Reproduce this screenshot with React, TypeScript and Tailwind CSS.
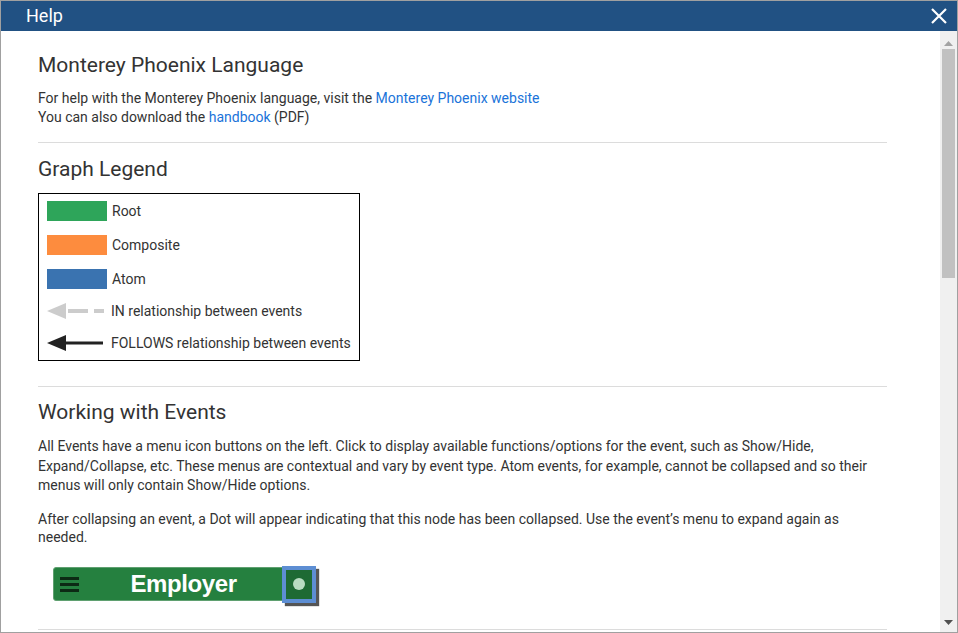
import React from 'react';

const legendSwatches = [
  { label: 'Root', color: 'bg-[#2ea55a]' },
  { label: 'Composite', color: 'bg-[#fd8c3e]' },
  { label: 'Atom', color: 'bg-[#3a73b0]' },
];

const App: React.FC = () => {
  return (
    <div className="w-[958px] h-[633px] border border-[#a0a0a0] flex flex-col overflow-hidden bg-white font-['Roboto',sans-serif]">
      {/* title bar */}
      <div className="h-[30px] shrink-0 bg-[#215183] flex items-center justify-between pl-[25px] pr-[9px]">
        <span className="text-white text-[18px] leading-none">Help</span>
        <svg width="18" height="18" viewBox="0 0 18 18" className="text-white">
          <path d="M2 2 L16 16 M16 2 L2 16" stroke="currentColor" strokeWidth="2.2" />
        </svg>
      </div>

      <div className="flex flex-1 min-h-0">
        {/* body */}
        <div className="flex-1 overflow-hidden pl-[37px] pr-[53px] text-[#333] text-[14px]">
          <h2 className="mt-[22px] text-[21px] leading-[24px] text-[#333]">Monterey Phoenix Language</h2>
          <p className="mt-[12px] leading-[19px]">
            For help with the Monterey Phoenix language, visit the{' '}
            <a className="text-[#1a73d9]">Monterey Phoenix website</a>
            <br />
            You can also download the <a className="text-[#1a73d9]">handbook</a> (PDF)
          </p>
          <hr className="mt-[15px] border-t border-[#dcdcdc]" />

          <h2 className="mt-[14px] text-[21px] leading-[24px]">Graph Legend</h2>
          <div className="mt-[12px] w-[322px] h-[168px] border border-black pl-[8px] pt-[7px]">
            {legendSwatches.map((s) => (
              <div key={s.label} className="flex items-center h-[20px] mb-[14px]">
                <div className={`w-[60px] h-[20px] ${s.color}`} />
                <span className="ml-[5px] leading-none -mt-[1px]">{s.label}</span>
              </div>
            ))}
            <div className="flex items-center h-[20px] -mt-[2px]">
              <svg width="60" height="20" viewBox="0 0 60 20">
                <polygon points="0,10 19,2 19,18" fill="#cccccc" />
                <rect x="21" y="8" width="20" height="4" fill="#cccccc" />
                <rect x="47" y="8" width="10" height="4" fill="#cccccc" />
              </svg>
              <span className="ml-[4px] leading-none">IN relationship between events</span>
            </div>
            <div className="flex items-center h-[20px] mt-[12px]">
              <svg width="60" height="20" viewBox="0 0 60 20">
                <polygon points="0,10 19,2 19,18" fill="#222" />
                <rect x="17" y="8.5" width="39" height="3" fill="#222" />
              </svg>
              <span className="ml-[4px] leading-none">FOLLOWS relationship between events</span>
            </div>
          </div>
          <hr className="mt-[25px] border-t border-[#dcdcdc]" />

          <h2 className="mt-[13px] text-[21px] leading-[24px]">Working with Events</h2>
          <p className="mt-[13px] leading-[19.5px]">
            All Events have a menu icon buttons on the left. Click to display available functions/options for the event, such as Show/Hide, Expand/Collapse, etc. These menus are contextual and vary by event type. Atom events, for example, cannot be collapsed and so their menus will only contain Show/Hide options.
          </p>
          <p className="mt-[14px] leading-[18.5px]">
            After collapsing an event, a Dot will appear indicating that this node has been collapsed. Use the event’s menu to expand again as needed.
          </p>

          {/* sample node */}
          <div className="mt-[19px] ml-[15px] flex items-center h-[37px]">
            <div className="w-[234px] h-[34px] bg-[#25803f] rounded-[3px] border border-[#5fa070] flex items-center pl-[6px]">
              <div className="flex flex-col gap-[3px]">
                <div className="w-[19px] h-[3px] bg-[#0c2a14]" />
                <div className="w-[19px] h-[3px] bg-[#0c2a14]" />
                <div className="w-[19px] h-[3px] bg-[#0c2a14]" />
              </div>
              <span className="flex-1 text-center text-white font-bold text-[24px] leading-none font-['Liberation_Sans',sans-serif] tracking-[-0.4px] pl-[2px]">
                Employer
              </span>
            </div>
            <div className="-ml-[5px] w-[34px] h-[37px] border-[4px] border-[#5d8ed3] bg-[#1e6a34] flex items-center justify-center shadow-[3px_3px_1px_#555]">
              <div className="w-[12px] h-[12px] rounded-full bg-[#b9dcc2]" />
            </div>
          </div>
          <hr className="mt-[26px] border-t border-[#dcdcdc]" />
        </div>

        {/* scrollbar */}
        <div className="w-[17px] shrink-0 bg-[#f0f0f0] flex flex-col items-center">
          <svg width="9" height="5" viewBox="0 0 9 5" className="mt-[10px]">
            <polygon points="0,5 4.5,0 9,5" fill="#a3a3a3" />
          </svg>
          <div className="mt-[3px] w-[13px] h-[229px] bg-[#c1c1c1]" />
          <div className="flex-1" />
          <svg width="9" height="5" viewBox="0 0 9 5" className="mb-[7px]">
            <polygon points="0,0 9,0 4.5,5" fill="#505050" />
          </svg>
        </div>
      </div>
    </div>
  );
};

export default App;
